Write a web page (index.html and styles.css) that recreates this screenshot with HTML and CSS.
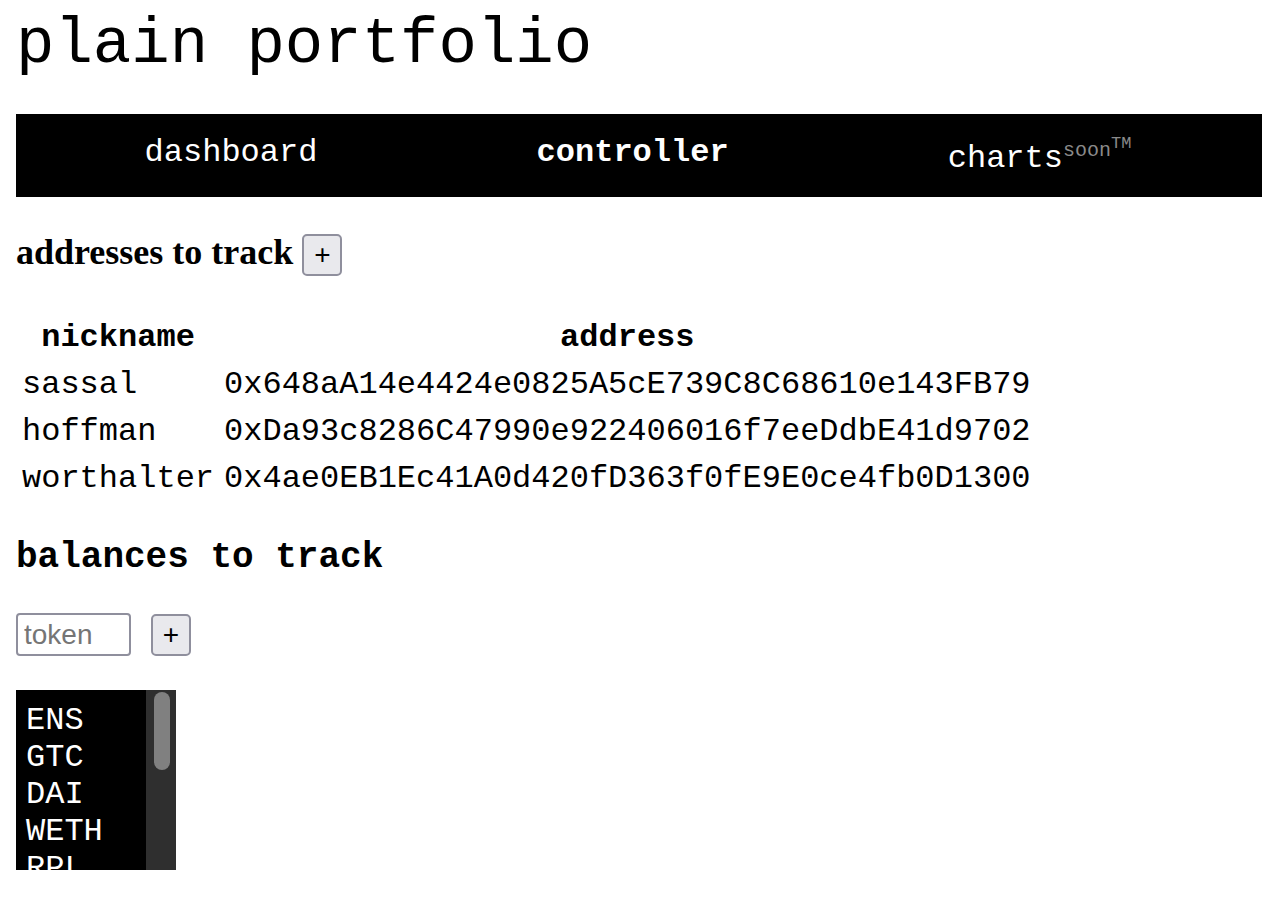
FILE: index.html
```html
<!DOCTYPE html>
<html lang="en">
<head>
<meta charset="utf-8">
<title>plain portfolio</title>
<link rel="stylesheet" href="styles.css">
</head>
<body>
<div class="page">
  <h1 class="title">plain portfolio</h1>
  <nav class="nav">
    <a class="nav-item" href="#">dashboard</a>
    <a class="nav-item active" href="#">controller</a>
    <a class="nav-item" href="#">charts<sup class="soon">soon<sup class="tm">TM</sup></sup></a>
  </nav>

  <section class="addresses">
    <h2 class="addr-title"><span>addresses to track</span><button class="add-btn head-btn">+</button></h2>
    <table class="addr-table">
      <thead>
        <tr><th>nickname</th><th>address</th></tr>
      </thead>
      <tbody>
        <tr><td>sassal</td><td>0x648aA14e4424e0825A5cE739C8C68610e143FB79</td></tr>
        <tr><td>hoffman</td><td>0xDa93c8286C47990e922406016f7eeDdbE41d9702</td></tr>
        <tr><td>worthalter</td><td>0x4ae0EB1Ec41A0d420fD363f0fE9E0ce4fb0D1300</td></tr>
      </tbody>
    </table>
  </section>

  <section class="balances">
    <h2 class="bal-title">balances to track</h2>
    <div class="token-form">
      <input class="token-input" type="text" placeholder="token">
      <button class="add-btn">+</button>
    </div>
    <div class="token-list">
      <div class="token-items">
        <div class="token">ENS</div>
        <div class="token">GTC</div>
        <div class="token">DAI</div>
        <div class="token">WETH</div>
        <div class="token">RPL</div>
        <div class="token">USDC</div>
        <div class="token">UNI</div>
        <div class="token">LINK</div>
        <div class="token">MKR</div>
        <div class="token">LDO</div>
      </div>
      <div class="scrollbar"><div class="thumb"></div></div>
    </div>
  </section>
</div>
</body>
</html>
```

FILE: styles.css
```css
html, body {
  margin: 0;
  padding: 0;
  background: #fff;
  color: #000;
  font-family: "Liberation Serif", "Times New Roman", serif;
}

.page {
  padding: 0 14px 0 16px;
}

.title {
  margin: 9px 0 33px;
  font-family: "Liberation Mono", "Courier New", monospace;
  font-size: 64px;
  font-weight: normal;
  line-height: 72px;
}

.nav {
  display: flex;
  justify-content: space-around;
  align-items: flex-start;
  box-sizing: border-box;
  height: 83px;
  padding: 20px 21px 20px 19px;
  background: #000;
}

.nav-item {
  color: #fff;
  text-decoration: none;
  font-family: "Liberation Mono", "Courier New", monospace;
  font-size: 32px;
  line-height: normal;
}

.nav-item.active {
  font-weight: bold;
}

.soon {
  font-size: 20px;
  color: #8a8a8a;
  vertical-align: super;
  line-height: normal;
}

.tm {
  font-size: 17px;
  color: #8a8a8a;
  vertical-align: super;
  line-height: normal;
}

.addr-title {
  display: flex;
  align-items: flex-start;
  gap: 9px;
  margin: 34px 0 0;
  font-family: "Liberation Serif", "Times New Roman", serif;
  font-size: 36px;
  font-weight: bold;
  line-height: normal;
}

.add-btn {
  box-sizing: border-box;
  width: 40px;
  height: 42px;
  padding: 0;
  border: 2px solid #8f8f9d;
  border-radius: 5px;
  background: #e9e9ed;
  color: #000;
  font-family: "Liberation Sans", Arial, sans-serif;
  font-size: 28px;
  line-height: 1;
}

.head-btn {
  margin-top: 3px;
}

.addr-table {
  margin-top: 37px;
  border-spacing: 2px;
  font-family: "Liberation Mono", "Courier New", monospace;
  font-size: 32px;
  line-height: normal;
}

.addr-table th,
.addr-table td {
  padding: 4px;
}

.addr-table th {
  text-align: center;
  font-weight: bold;
}

.addr-table td {
  text-align: left;
}

.bal-title {
  margin: 34px 0 0;
  font-family: "Liberation Mono", "Courier New", monospace;
  font-size: 36px;
  font-weight: bold;
  line-height: normal;
}

.token-form {
  display: flex;
  align-items: flex-end;
  gap: 20px;
  margin-top: 35px;
}

.token-input {
  box-sizing: border-box;
  width: 115px;
  height: 43px;
  margin: 0;
  padding: 0 6px;
  border: 2px solid #8f8f9d;
  border-radius: 4px;
  background: #fff;
  font-family: "Liberation Sans", Arial, sans-serif;
  font-size: 28px;
}

.token-input::placeholder {
  color: #757575;
}

.token-list {
  display: flex;
  width: 160px;
  height: 180px;
  margin-top: 34px;
  background: #000;
}

.token-items {
  flex: 1;
  overflow: hidden;
  padding: 12px 10px 10px;
  color: #fff;
  font-family: "Liberation Mono", "Courier New", monospace;
  font-size: 32px;
  line-height: 37px;
}

.scrollbar {
  flex: none;
  box-sizing: border-box;
  width: 30px;
  padding: 2px 6px 0 8px;
  background: #2f2f2f;
}

.thumb {
  height: 78px;
  border-radius: 8px;
  background: #808080;
}
```
